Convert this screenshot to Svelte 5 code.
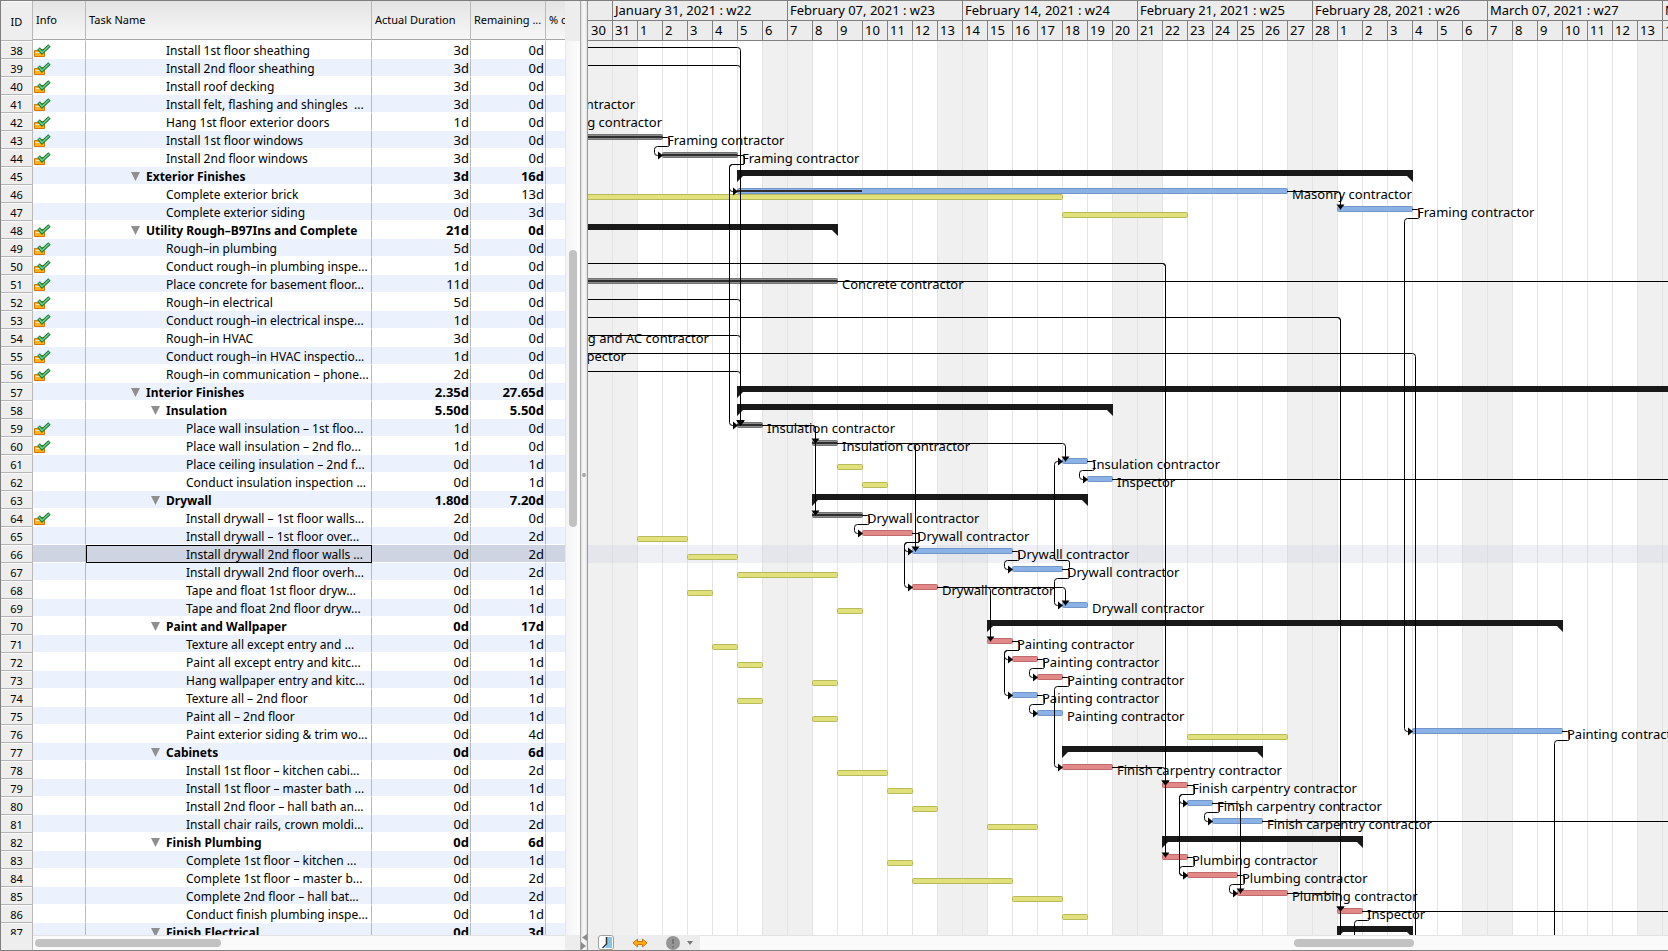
<script>

  const ROW = 18;
  const DAY = 25;
  const FIRST = 38;
  const END = 60;

  // level 1 and 2 hold groups, level 3 hangs under a level 2 group
  let tasks = [
    { id: 38, name: 'Install 1st floor sheathing', level: 2, actual: '3d', left: '0d', done: true },
    { id: 39, name: 'Install 2nd floor sheathing', level: 2, actual: '3d', left: '0d', done: true },
    { id: 40, name: 'Install roof decking', level: 2, actual: '3d', left: '0d', done: true },
    { id: 41, name: 'Install felt, flashing and shingles  ...', level: 2, actual: '3d', left: '0d', done: true },
    { id: 42, name: 'Hang 1st floor exterior doors', level: 2, actual: '1d', left: '0d', done: true },
    { id: 43, name: 'Install 1st floor windows', level: 2, actual: '3d', left: '0d', done: true },
    { id: 44, name: 'Install 2nd floor windows', level: 2, actual: '3d', left: '0d', done: true },
    { id: 45, name: 'Exterior Finishes', level: 1, actual: '3d', left: '16d', group: true },
    { id: 46, name: 'Complete exterior brick', level: 2, actual: '3d', left: '13d' },
    { id: 47, name: 'Complete exterior siding', level: 2, actual: '0d', left: '3d' },
    { id: 48, name: 'Utility Rough–B97Ins and Complete', level: 1, actual: '21d', left: '0d', done: true, group: true },
    { id: 49, name: 'Rough–in plumbing', level: 2, actual: '5d', left: '0d', done: true },
    { id: 50, name: 'Conduct rough–in plumbing inspe...', level: 2, actual: '1d', left: '0d', done: true },
    { id: 51, name: 'Place concrete for basement floor...', level: 2, actual: '11d', left: '0d', done: true },
    { id: 52, name: 'Rough–in electrical', level: 2, actual: '5d', left: '0d', done: true },
    { id: 53, name: 'Conduct rough–in electrical inspe...', level: 2, actual: '1d', left: '0d', done: true },
    { id: 54, name: 'Rough–in HVAC', level: 2, actual: '3d', left: '0d', done: true },
    { id: 55, name: 'Conduct rough–in HVAC inspectio...', level: 2, actual: '1d', left: '0d', done: true },
    { id: 56, name: 'Rough–in communication – phone...', level: 2, actual: '2d', left: '0d', done: true },
    { id: 57, name: 'Interior Finishes', level: 1, actual: '2.35d', left: '27.65d', group: true },
    { id: 58, name: 'Insulation', level: 2, actual: '5.50d', left: '5.50d', group: true },
    { id: 59, name: 'Place wall insulation – 1st floo...', level: 3, actual: '1d', left: '0d', done: true },
    { id: 60, name: 'Place wall insulation – 2nd flo...', level: 3, actual: '1d', left: '0d', done: true },
    { id: 61, name: 'Place ceiling insulation – 2nd f...', level: 3, actual: '0d', left: '1d' },
    { id: 62, name: 'Conduct insulation inspection ...', level: 3, actual: '0d', left: '1d' },
    { id: 63, name: 'Drywall', level: 2, actual: '1.80d', left: '7.20d', group: true },
    { id: 64, name: 'Install drywall – 1st floor walls...', level: 3, actual: '2d', left: '0d', done: true },
    { id: 65, name: 'Install drywall – 1st floor over...', level: 3, actual: '0d', left: '2d' },
    { id: 66, name: 'Install drywall 2nd floor walls ...', level: 3, actual: '0d', left: '2d' },
    { id: 67, name: 'Install drywall 2nd floor overh...', level: 3, actual: '0d', left: '2d' },
    { id: 68, name: 'Tape and float 1st floor dryw...', level: 3, actual: '0d', left: '1d' },
    { id: 69, name: 'Tape and float 2nd floor dryw...', level: 3, actual: '0d', left: '1d' },
    { id: 70, name: 'Paint and Wallpaper', level: 2, actual: '0d', left: '17d', group: true },
    { id: 71, name: 'Texture all except entry and ...', level: 3, actual: '0d', left: '1d' },
    { id: 72, name: 'Paint all except entry and kitc...', level: 3, actual: '0d', left: '1d' },
    { id: 73, name: 'Hang wallpaper entry and kitc...', level: 3, actual: '0d', left: '1d' },
    { id: 74, name: 'Texture all – 2nd floor', level: 3, actual: '0d', left: '1d' },
    { id: 75, name: 'Paint all – 2nd floor', level: 3, actual: '0d', left: '1d' },
    { id: 76, name: 'Paint exterior siding & trim wo...', level: 3, actual: '0d', left: '4d' },
    { id: 77, name: 'Cabinets', level: 2, actual: '0d', left: '6d', group: true },
    { id: 78, name: 'Install 1st floor – kitchen cabi...', level: 3, actual: '0d', left: '2d' },
    { id: 79, name: 'Install 1st floor – master bath ...', level: 3, actual: '0d', left: '1d' },
    { id: 80, name: 'Install 2nd floor – hall bath an...', level: 3, actual: '0d', left: '1d' },
    { id: 81, name: 'Install chair rails, crown moldi...', level: 3, actual: '0d', left: '2d' },
    { id: 82, name: 'Finish Plumbing', level: 2, actual: '0d', left: '6d', group: true },
    { id: 83, name: 'Complete 1st floor – kitchen ...', level: 3, actual: '0d', left: '1d' },
    { id: 84, name: 'Complete 1st floor – master b...', level: 3, actual: '0d', left: '2d' },
    { id: 85, name: 'Complete 2nd floor – hall bat...', level: 3, actual: '0d', left: '2d' },
    { id: 86, name: 'Conduct finish plumbing inspe...', level: 3, actual: '0d', left: '1d' },
    { id: 87, name: 'Finish Electrical', level: 2, actual: '0d', left: '3d', group: true }
  ];

  // days are counted from January 31
  let bars = [
    { id: 43, kind: 'done', from: -3, to: 2, who: 'Framing contractor' },
    { id: 44, kind: 'done', from: 2, to: 5, who: 'Framing contractor' },
    { id: 46, kind: 'normal', from: 5, to: 27, progress: 10, who: 'Masonry contractor' },
    { id: 47, kind: 'normal', from: 29, to: 32, who: 'Framing contractor' },
    { id: 51, kind: 'done', from: -3, to: 9, who: 'Concrete contractor' },
    { id: 59, kind: 'done', from: 5, to: 6, who: 'Insulation contractor' },
    { id: 60, kind: 'done', from: 8, to: 9, who: 'Insulation contractor' },
    { id: 61, kind: 'normal', from: 18, to: 19, who: 'Insulation contractor' },
    { id: 62, kind: 'normal', from: 19, to: 20, who: 'Inspector' },
    { id: 64, kind: 'done', from: 8, to: 10, who: 'Drywall contractor' },
    { id: 65, kind: 'critical', from: 10, to: 12, who: 'Drywall contractor' },
    { id: 66, kind: 'normal', from: 12, to: 16, who: 'Drywall contractor' },
    { id: 67, kind: 'normal', from: 16, to: 18, who: 'Drywall contractor' },
    { id: 68, kind: 'critical', from: 12, to: 13, who: 'Drywall contractor' },
    { id: 69, kind: 'normal', from: 18, to: 19, who: 'Drywall contractor' },
    { id: 71, kind: 'critical', from: 15, to: 16, who: 'Painting contractor' },
    { id: 72, kind: 'critical', from: 16, to: 17, who: 'Painting contractor' },
    { id: 73, kind: 'critical', from: 17, to: 18, who: 'Painting contractor' },
    { id: 74, kind: 'normal', from: 16, to: 17, who: 'Painting contractor' },
    { id: 75, kind: 'normal', from: 17, to: 18, who: 'Painting contractor' },
    { id: 76, kind: 'normal', from: 32, to: 38, who: 'Painting contractor' },
    { id: 78, kind: 'critical', from: 18, to: 20, who: 'Finish carpentry contractor' },
    { id: 79, kind: 'critical', from: 22, to: 23, who: 'Finish carpentry contractor' },
    { id: 80, kind: 'normal', from: 23, to: 24, who: 'Finish carpentry contractor' },
    { id: 81, kind: 'normal', from: 24, to: 26, who: 'Finish carpentry contractor' },
    { id: 83, kind: 'critical', from: 22, to: 23, who: 'Plumbing contractor' },
    { id: 84, kind: 'critical', from: 23, to: 25, who: 'Plumbing contractor' },
    { id: 85, kind: 'critical', from: 25, to: 27, who: 'Plumbing contractor' },
    { id: 86, kind: 'critical', from: 29, to: 30, who: 'Inspector' }
  ];

  // labels of bars that end left of the visible days: id, right edge, text
  let earlier = [
    [41, 47, 'Roofing contractor'],
    [42, 74, 'Framing contractor'],
    [54, 121, 'Heating and AC contractor'],
    [55, 38, 'Inspector']
  ];

  // id, from, to
  let baselines = [
    [46, -3, 18], [47, 18, 23], [61, 9, 10], [62, 10, 11], [65, 1, 3], [66, 3, 5],
    [67, 5, 9], [68, 3, 4], [69, 9, 10], [71, 4, 5], [72, 5, 6], [73, 8, 9],
    [74, 5, 6], [75, 8, 9], [76, 23, 27], [78, 9, 11], [79, 11, 12], [80, 12, 13],
    [81, 15, 17], [83, 11, 12], [84, 12, 16], [85, 16, 18], [86, 18, 19]
  ];

  let summaries = [
    [45, 5, 32], [48, -3, 9], [57, 5, END], [58, 5, 20], [63, 8, 19],
    [70, 15, 38], [77, 18, 26], [82, 22, 30], [87, 29, 32]
  ];

  // from id, day it ends, to id, day it starts
  let hooks = [
    [43, 2, 44, 2], [44, 5, 46, 5], [44, 5, 59, 5], [47, 32, 76, 32], [61, 19, 62, 19],
    [64, 10, 65, 10], [65, 12, 66, 12], [65, 12, 68, 12], [66, 16, 67, 16], [67, 18, 69, 18],
    [67, 18, 61, 18], [71, 16, 72, 16], [71, 16, 74, 16], [72, 17, 73, 17], [73, 18, 78, 18],
    [74, 17, 75, 17], [76, 38, 90, 38], [79, 23, 80, 23], [79, 23, 84, 23], [80, 24, 81, 24],
    [83, 23, 84, 23], [84, 25, 85, 25], [86, 30, 90, 30]
  ];

  let drops = [
    [38, -3, 59, 5], [39, -3, 59, 5], [46, 27, 47, 29], [50, -3, 79, 22], [50, -3, 83, 22],
    [52, -3, 59, 5], [53, -3, 86, 29], [53, -3, 90, 29], [54, -3, 59, 5], [55, -3, 90, 32],
    [56, -3, 59, 5], [59, 6, 60, 8], [59, 6, 64, 8], [60, 9, 66, 12], [60, 9, 61, 18],
    [68, 13, 71, 15], [68, 13, 69, 18], [78, 20, 79, 22], [80, 24, 85, 25], [85, 27, 86, 29]
  ];

  let runOuts = [[51, 9], [62, 20], [81, 26], [86, 30]];

  let weeks = [
    'January 31, 2021 : w22',
    'February 07, 2021 : w23',
    'February 14, 2021 : w24',
    'February 21, 2021 : w25',
    'February 28, 2021 : w26',
    'March 07, 2021 : w27',
    'March 14, 2021 : w28'
  ];

  let days = [];
  for (let i = 0; i < 49; i++) {
    days.push(i === 0 ? 31 : i <= 28 ? i : i - 28);
  }

  let selected = 66;

  const x = (day) => 24 + day * DAY;
  const y = (id) => (id - FIRST) * ROW;
  const mid = (id) => y(id) + 6.5;

  function hookPath(a, end, b, start) {
    const xe = x(end) + 7.5;
    const xs = x(start) - 7.5;
    const ya = mid(a);
    const yb = mid(b);
    const s = yb > ya ? 1 : -1;
    const ym = ya + 9 * s;
    return `M${x(end)} ${ya}H${xe - 2}q2 0 2 ${2 * s}V${ym - 2 * s}q0 ${2 * s} -2 ${2 * s}H${xs + 3}q-3 0 -3 ${3 * s}V${yb - 3 * s}q0 ${3 * s} 3 ${3 * s}H${x(start)}`;
  }

  function dropPath(a, end, b, start) {
    const xs = x(start) + 3.5;
    return `M${x(end)} ${mid(a)}H${xs - 3}q3 0 3 3V${mid(b)}`;
  }

  function select(id) {
    selected = id;
  }
</script>

<main class="app">
  <section class="sheet">
    <div class="rows">
      <table>
        <colgroup>
          <col class="c-id" /><col class="c-info" /><col class="c-name" />
          <col class="c-actual" /><col class="c-left" /><col class="c-pct" />
        </colgroup>
        <thead>
          <tr>
            <th class="id">ID</th>
            <th>Info</th>
            <th>Task Name</th>
            <th>Actual Duration</th>
            <th>Remaining ...</th>
            <th class="last">% c</th>
          </tr>
        </thead>
        <tbody>
          {#each tasks as task}
            <tr class:odd={task.id % 2} class:group={task.group} class:selected={task.id === selected} on:click={() => select(task.id)}>
              <th class="id" scope="row">{task.id}</th>
              <td class="info">
                {#if task.done}
                  <svg width="17" height="14" viewBox="0 0 17 14">
                    <path d="M.5 12.500v-6h3l1-1h6v7z" fill="#ffb21c" stroke="#d5760c" />
                    <path d="M1.500 8.500h8" stroke="#ffe9a8" />
                    <path d="M4.500 4.500l3.500 4L15.500 1.500" fill="none" stroke="#177a38" stroke-width="3.500" />
                    <path d="M5 5l3 3.500L15 2" fill="none" stroke="#6fd388" stroke-width="1.500" />
                  </svg>
                {/if}
              </td>
              <td class="name level{task.level}">
                {#if task.group}
                  <button class="fold" aria-label="Collapse"><svg width="9" height="9" viewBox="0 0 9 9"><path d="M0 0h9L4.500 9z" fill="#8f8f8f" /></svg></button>{/if}{task.name}
              </td>
              <td class="num">{task.actual}</td>
              <td class="num">{task.left}</td>
              <td class="last"></td>
            </tr>
          {/each}
        </tbody>
      </table>
      <div class="vbar"><div class="corner"></div><div class="track"><div class="thumb"></div></div></div>
    </div>
    <div class="foot">
      <div class="footId"></div>
      <div class="hbar"><div class="thumb"></div></div>
      <div class="footEnd"></div>
    </div>
  </section>

  <div class="divider">
    <span class="grip"></span>
    <svg width="6" height="16" viewBox="0 0 6 16"><path d="M6 0v7L1 3.500zM0 8v8l5-4z" fill="#8c8c8c" /></svg>
  </div>

  <section class="chart">
    <div class="scale">
      <div class="weeks">
        <span class="lead"></span>
        {#each weeks as week}
          <span class="week">{week}</span>
        {/each}
      </div>
      <div class="days">
        <span class="lead">30</span>
        {#each days as day}
          <span class="day">{day}</span>
        {/each}
      </div>
    </div>

    <div class="canvas">
      <svg width="100%" height={tasks.length * ROW}>
        <rect x="0" y="0" width="49" height="100%" class="weekend" />
        {#each [6, 13, 20, 27, 34, 41, 48] as sat}
          <rect x={x(sat)} y="0" width={DAY * 2} height="100%" class="weekend" />
        {/each}
        {#each days as day, i}
          <rect x={x(i)} y="0" width="1" height="100%" class="grid" />
        {/each}
        <rect x="0" y={y(selected)} width="100%" height={ROW} class="mark" />

        {#each baselines as [id, from, to]}
          <rect x={x(from) + 0.5} y={y(id) + 9.5} width={(to - from) * DAY} height="5" rx="1" class="baseline" />
        {/each}

        {#each bars as bar}
          <rect x={x(bar.from) + 0.5} y={y(bar.id) + 3.5} width={(bar.to - bar.from) * DAY} height="5" rx="1" class={bar.kind} />
          {#if bar.kind === 'done'}
            <rect x={x(bar.from)} y={y(bar.id) + 5} width={(bar.to - bar.from) * DAY} height="2" class="core" />
          {/if}
          {#if bar.progress}
            <rect x={x(bar.from)} y={y(bar.id) + 5} width={(bar.progress - bar.from) * DAY} height="2" class="core" />
          {/if}
          <text x={x(bar.to) + 5} y={y(bar.id) + 14}>{bar.who}</text>
        {/each}

        {#each earlier as [id, right, who]}
          <text x={right} y={y(id) + 14} text-anchor="end">{who}</text>
        {/each}

        {#each summaries as [id, from, to]}
          <path class="summary" d="M{x(from)} {y(id) + 3}H{x(to) + 1}v12l-6 -6H{x(from) + 6}l-6 6z" />
        {/each}

        {#each runOuts as [id, end]}
          <path class="link" d="M{x(end)} {mid(id)}H{x(END)}" />
        {/each}
        {#each hooks as [a, end, b, start]}
          <path class="link" d={hookPath(a, end, b, start)} />
          <path d="M{x(start) + 1} {mid(b)}l-5 -4v8z" />
        {/each}
        {#each drops as [a, end, b, start]}
          <path class="link" d={dropPath(a, end, b, start)} />
          <path d="M{x(start) + 3.5} {mid(b)}l-4 -5h8z" />
        {/each}
      </svg>
    </div>

    <div class="foot">
      <div class="tools">
        <button aria-label="Time scale">
          <svg width="16" height="15" viewBox="0 0 16 15">
            <rect x=".5" y=".5" width="15" height="14" rx="2.500" fill="#fff" stroke="#a0a0a0" />
            <path d="M9 2h5v11H7l2-4z" fill="#86c5e6" />
            <path d="M8.500 2v7l-4 4" fill="none" stroke="#333" stroke-width="1.500" />
          </svg>
        </button>
        <button aria-label="Fit to width">
          <svg width="16" height="10" viewBox="0 0 16 10">
            <path d="M1 5l4.500-4v2.500h5V1L15 5l-4.500 4V6.500h-5V9z" fill="#ffab0f" stroke="#d9740a" />
          </svg>
        </button>
        <button class="warn" aria-label="Problems">
          <svg width="14" height="14" viewBox="0 0 14 14">
            <circle cx="7" cy="7" r="7" fill="#959595" />
            <path d="M7 3v5M7 10v1.500" stroke="#757575" stroke-width="2" />
          </svg>
          <svg width="6" height="4" viewBox="0 0 6 4"><path d="M0 0h6L3 4z" fill="#777" /></svg>
        </button>
      </div>
      <div class="hbar wideBar"><div class="thumb"></div></div>
    </div>
  </section>
</main>

<style>
  :global(body) {
    margin: 0;
    background: #ededed;
  }

  .app {
    box-sizing: border-box;
    height: 100vh;
    display: flex;
    overflow: hidden;
    border: 1px solid #7f7f7f;
    border-right: none;
    background: #ededed;
    color: #000;
    font: 13px "Noto Sans", "Open Sans", sans-serif;
  }

  button {
    border: none;
    background: none;
    padding: 0;
    font: inherit;
  }

  .sheet {
    flex: none;
    display: flex;
    flex-direction: column;
  }

  .rows {
    flex: 1;
    min-height: 0;
    display: flex;
    overflow: hidden;
  }

  table {
    flex: none;
    width: 564px;
    height: max-content;
    table-layout: fixed;
    border-spacing: 0;
    background: #fff;
  }

  .c-id { width: 32px; }
  .c-info { width: 53px; }
  .c-name { width: 286px; }
  .c-actual { width: 99px; }
  .c-left { width: 75px; }
  .c-pct { width: 19px; }

  th, td {
    box-sizing: border-box;
    padding: 2px 0 0;
    overflow: hidden;
    white-space: pre;
    border-right: 1px solid #b9b9b9;
    border-bottom: 1px solid #fff;
  }

  thead th {
    height: 40px;
    padding: 0 0 2px 3px;
    text-align: left;
    font-size: 11px;
    font-weight: normal;
    background: linear-gradient(#e4e4e4, #f7f7f7);
    box-shadow: inset 0 -1px #a6a6a6;
  }

  tbody tr {
    height: 18px;
    line-height: 15px;
  }

  .odd td { background: #ebf2fe; }
  .selected td { background: #ced4e2; }
  .selected .name { outline: 1px solid #000; outline-offset: -1px; }

  th.id {
    padding: 2px 0 0;
    text-align: center;
    font-size: 11px;
    font-weight: normal;
    background: #eee;
    border-bottom-color: #b4b4b4;
    box-shadow: inset 0 1px #fafafa;
  }

  .group td { font-weight: bold; }

  .info svg {
    display: block;
    margin-left: 1px;
  }

  .name { font-size: 12px; }
  .level1 { padding-left: 60px; }
  .level2 { padding-left: 80px; }
  .level3 { padding-left: 100px; }

  .fold {
    width: 15px;
    margin-left: -15px;
    text-align: left;
    line-height: 9px;
  }

  .num {
    padding-right: 1px;
    text-align: right;
  }

  .last { border-right: none; }

  .vbar {
    width: 15px;
    display: flex;
    flex-direction: column;
  }

  .corner {
    height: 40px;
    flex: none;
  }

  .track {
    flex: 1;
    border-left: 1px solid #e6e6e6;
    background: linear-gradient(to right, #f4f4f4, #fdfdfd);
  }

  .track .thumb {
    width: 8px;
    height: 31%;
    margin: 209px 0 0 3px;
  }

  .thumb {
    border-radius: 4px;
    background: #c2c2c2;
  }

  .foot {
    flex: none;
    height: 15px;
    display: flex;
  }

  .footId {
    width: 31px;
    border-right: 1px solid #b9b9b9;
    background: #eee;
  }

  .footEnd { width: 15px; }

  .hbar {
    flex: 1;
    box-sizing: border-box;
    border-top: 1px solid #e3e3e3;
    padding: 3px 0 0 2px;
    background: #fafafa;
  }

  .hbar .thumb {
    width: 35%;
    height: 8px;
  }

  .divider {
    flex: none;
    box-sizing: border-box;
    width: 8px;
    border-left: 1px solid #a8a8a8;
    border-right: 1px solid #999;
    background: linear-gradient(to right, #e2e2e2, #fafafa, #e2e2e2);
    display: flex;
    flex-direction: column;
    align-items: center;
    padding-top: 14px;
  }

  .grip {
    width: 4px;
    height: 4px;
    margin: auto 0;
    border-radius: 50%;
    background: #a5a5a5;
  }

  .chart {
    flex: 1;
    min-width: 0;
    display: flex;
    flex-direction: column;
  }

  .scale {
    overflow: hidden;
    background: #ececec;
  }

  .weeks, .days {
    box-sizing: border-box;
    height: 20px;
    display: flex;
    line-height: 19px;
    border-bottom: 1px solid #808080;
  }

  .days { line-height: 18px; }

  .lead, .week, .day {
    box-sizing: border-box;
    flex: none;
    padding-left: 3px;
    white-space: nowrap;
  }

  .lead { width: 24px; }

  .week, .day {
    border-left: 1px solid #808080;
    padding-left: 2px;
  }

  .week { width: 175px; }
  .day { width: 25px; }

  .canvas {
    flex: 1;
    min-height: 0;
    overflow: hidden;
    background: #fff;
  }

  .canvas svg { display: block; }

  .weekend { fill: #f0f0f0; }
  .grid { fill: #e4e4e4; }
  .mark { fill: #cdd1e4; opacity: .32; }
  .baseline { fill: #e1e17b; stroke: #b8b85c; }
  .normal { fill: #8ab2e6; stroke: #7396c6; }
  .critical { fill: #e38888; stroke: #bf6b6b; }
  .done { fill: #8d8d8d; stroke: #737373; }
  .core { fill: #2e2e2e; }
  .summary { fill: #191919; }

  .link {
    fill: none;
    stroke: #000;
  }

  .tools {
    flex: none;
    box-sizing: border-box;
    width: 112px;
    padding-left: 10px;
    display: flex;
    align-items: center;
    gap: 18px;
  }

  .tools button {
    display: flex;
    align-items: center;
  }

  .tools .warn { gap: 7px; }

  .wideBar { padding-left: 55%; }
  .wideBar .thumb { width: 32%; }
</style>
